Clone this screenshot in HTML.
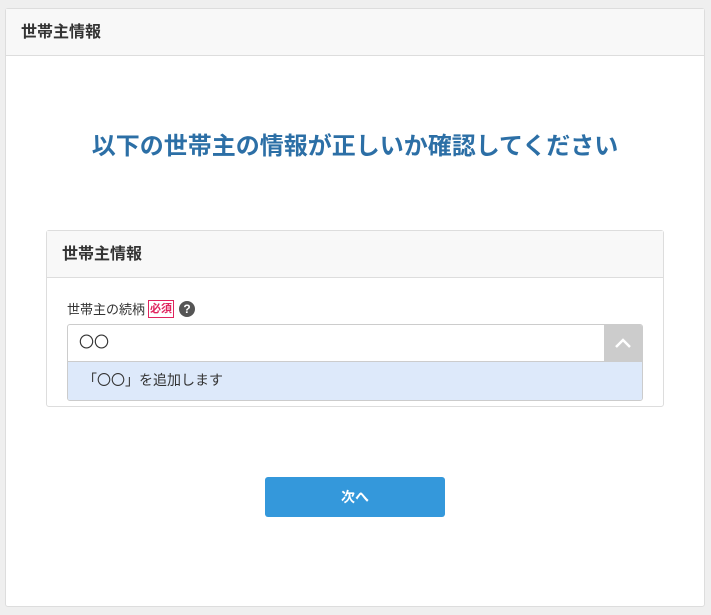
<!DOCTYPE html>
<html><head><meta charset="utf-8"><style>
*{box-sizing:border-box;margin:0;padding:0}
body{width:711px;height:615px;background:#efefef;font-family:"Liberation Sans","Noto Sans CJK JP",sans-serif;color:#333;position:relative;overflow:hidden}
.card{position:absolute;left:5px;top:8px;width:700px;height:599px;background:#fff;border:1px solid #ddd;border-radius:3px}
.hd{height:47px;background:#f8f8f8;border-bottom:1px solid #ddd;padding-left:15px;line-height:47px;font-size:16px;font-weight:bold;color:#333}
.title{position:absolute;top:117px;left:0;width:100%;text-align:center;font-size:24px;font-weight:bold;color:#2c6fa6}
.inner{position:absolute;left:40px;top:221px;width:618px;height:177px;border:1px solid #ddd;border-radius:3px}
.inner .hd{height:47px;line-height:47px;padding-left:15px}
.lbl{position:absolute;left:20px;top:68px;font-size:13px;color:#333;display:flex;align-items:center}
.req{border:1px solid #e0245e;color:#e0245e;font-size:11px;padding:1px 1px;margin-left:3px;line-height:14px;font-weight:bold}
.q{width:16px;height:16px;border-radius:50%;background:#555;color:#fff;font-size:12px;font-weight:bold;text-align:center;line-height:16px;margin-left:5px}
.box{position:absolute;left:20px;top:93px;width:576px;height:77px;border:1px solid #ccc;border-radius:3px;overflow:hidden}
.in{height:37px;border-bottom:1px solid #ccc;padding-left:11px;line-height:36px;font-size:15px}
.arr{position:absolute;right:0;top:0;width:38px;height:37px;background:#ccc}
.dd{background:#dde9fa;height:38px;line-height:37px;padding-left:15px;font-size:14px}
.btn{position:absolute;left:259px;top:468px;width:180px;height:40px;background:#3498db;border-radius:3px;color:#fff;font-size:14px;font-weight:bold;text-align:center;line-height:40px}
</style></head><body>
<div class="card">
<div class="hd">世帯主情報</div>
<div class="title">以下の世帯主の情報が正しいか確認してください</div>
<div class="inner">
<div class="hd">世帯主情報</div>
<div class="lbl">世帯主の続柄<span class="req">必須</span><span class="q">?</span></div>
<div class="box">
<div class="in">〇〇</div>
<div class="arr"><svg width="38" height="37"><path d="M12 22 L19 15 L26 22" stroke="#fff" stroke-width="2.5" fill="none"/></svg></div>
<div class="dd">「〇〇」を追加します</div>
</div>
</div>
<div class="btn">次へ</div>
</div>
</body></html>
